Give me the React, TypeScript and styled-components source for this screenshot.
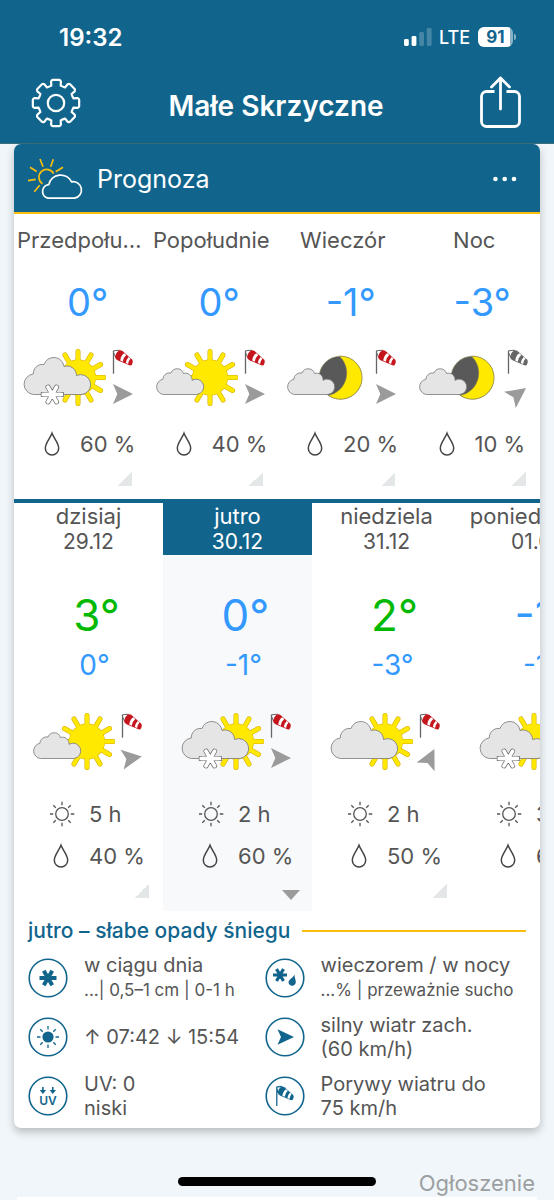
import React from 'react';
import styled, { createGlobalStyle } from 'styled-components';

const BLUE = '#11658d';
const YELLOW = '#f9bd0e';
const TEXT = '#555555';
const COLD = '#3399ff';
const WARM = '#00b900';

const GlobalStyle = createGlobalStyle`
  *, *::before, *::after { box-sizing: border-box; }
  body {
    margin: 0;
    background: #f0f6fa;
    color: ${TEXT};
    font-family: Inter, "Liberation Sans", sans-serif;
    font-size: 22px;
  }
  button { font: inherit; color: inherit; background: none; border: 0; padding: 0; cursor: pointer; }
  svg { display: block; flex: none; }
`;

/* ---------- page frame ---------- */

const Page = styled.div`
  display: flex;
  flex-direction: column;
  min-height: 100vh;
`;

const TopBar = styled.header`
  flex: none;
  background: ${BLUE};
  color: #fff;
  padding-bottom: 11px;
  border-bottom: 1px solid #3a7277;
`;

const StatusBar = styled.div`
  display: flex;
  align-items: center;
  height: 74px;
  padding: 0 41px 0 59px;
`;

const Clock = styled.time`
  flex: 1;
  font-size: 24px;
  font-weight: 600;
`;

const Network = styled.span`
  margin: 0 8px 0 7px;
  font-size: 18px;
  font-weight: 500;
`;

const Battery = styled.span`
  position: relative;
  display: flex;
  align-items: center;
  justify-content: center;
  width: 35px;
  height: 20px;
  border-radius: 6px;
  background: linear-gradient(to right, #fff 32px, #88b2c6 32px);
  color: ${BLUE};
  font-size: 17px;
  font-weight: 700;
  &::after {
    content: '';
    position: absolute;
    right: -3px;
    top: 7px;
    width: 2px;
    height: 6px;
    border-radius: 0 2px 2px 0;
    background: #88b2c6;
  }
`;

const TitleBar = styled.div`
  display: grid;
  grid-template-columns: 1fr auto 1fr;
  align-items: center;
  height: 58px;
  padding: 0 32px 0 30px;
  & > :last-child {
    justify-self: end;
  }
`;

const IconButton = styled.button`
  justify-self: start;
`;

const Title = styled.h1`
  margin: 0;
  padding-top: 5px;
  font-size: 28px;
  font-weight: 600;
`;

const Content = styled.main`
  display: flex;
  flex-direction: column;
  flex: 1;
  padding: 0 14px;
`;

/* ---------- forecast card ---------- */

const Card = styled.section`
  flex: none;
  overflow: hidden;
  border-radius: 7px;
  background: #fff;
  padding-bottom: 3px;
  box-shadow: 0 4px 8px rgba(0, 0, 0, 0.24);
`;

const CardHeader = styled.div`
  display: flex;
  align-items: center;
  height: 70px;
  padding: 2px 20px 0 13px;
  background: ${BLUE};
  border-bottom: 2px solid ${YELLOW};
  color: #fff;
`;

const CardTitle = styled.h2`
  flex: 1;
  margin: 0 0 0 12px;
  font-size: 25px;
  font-weight: 400;
`;

const Hours = styled.div`
  display: flex;
  border-bottom: 4px solid ${BLUE};
`;

const HourCell = styled.button`
  display: flex;
  flex-direction: column;
  flex: 1 1 0;
  min-width: 0;
  padding: 12px 0 13px;
`;

const HourName = styled.span`
  width: 100%;
  padding: 0 3px;
  line-height: 28px;
  overflow: hidden;
  text-overflow: ellipsis;
  white-space: nowrap;
`;

const Temp = styled.span<{ $color: string; $size: number; $line: number; $top: number; $inset: number }>`
  width: 100%;
  margin-top: ${(p) => p.$top}px;
  padding-left: ${(p) => p.$inset}px;
  color: ${(p) => p.$color};
  font-size: ${(p) => p.$size}px;
  line-height: ${(p) => p.$line}px;
`;

const SkyRow = styled.span<{ $inset: number; $top: number }>`
  display: flex;
  gap: 6px;
  margin: ${(p) => p.$top}px 0 0 ${(p) => p.$inset}px;
`;

const WindStack = styled.span`
  display: flex;
  flex-direction: column;
  gap: 9px;
`;

const Reading = styled.span<{ $inset: number; $top: number }>`
  display: flex;
  align-items: center;
  gap: 14px;
  margin: ${(p) => p.$top}px 0 0 ${(p) => p.$inset}px;
  line-height: 28px;
  white-space: nowrap;
`;

const Corner = styled.span`
  align-self: flex-end;
  width: 14px;
  height: 14px;
  margin: 14px 14px 0 0;
  background: linear-gradient(135deg, transparent 50%, #e4e7e8 50%);
`;

const OpenMark = styled.span`
  align-self: flex-end;
  height: 10px;
  margin: 20px 12px -2px 0;
  border: solid transparent;
  border-width: 10px 9px 0;
  border-top-color: #9b9b9b;
`;

const Days = styled.div`
  display: flex;
  overflow-x: auto;
  scrollbar-width: none;
`;

const DayCell = styled.button<{ $active: boolean }>`
  display: flex;
  flex: 0 0 149px;
  flex-direction: column;
  padding-bottom: 13px;
  background: ${(p) => (p.$active ? '#f7f9fb' : '#fff')};
`;

const DayHead = styled.span<{ $active: boolean }>`
  width: 100%;
  line-height: 26px;
  background: ${(p) => (p.$active ? BLUE : 'transparent')};
  color: ${(p) => (p.$active ? '#fff' : TEXT)};
`;

const DayLine = styled.span<{ $size: number }>`
  display: block;
  font-size: ${(p) => p.$size}px;
`;

/* ---------- details ---------- */

const DetailTitle = styled.h3`
  display: flex;
  align-items: center;
  gap: 12px;
  margin: 6px 14px 3px;
  color: ${BLUE};
  font-size: 21px;
  font-weight: 500;
  line-height: 28px;
  &::after {
    content: '';
    flex: 1;
    height: 2px;
    background: ${YELLOW};
  }
`;

const Details = styled.div`
  display: grid;
  grid-template-columns: 19fr 21fr;
  grid-auto-rows: 59px;
  padding: 0 14px;
`;

const Detail = styled.div`
  display: flex;
  align-items: center;
  gap: 16px;
  font-size: 20px;
  line-height: 24px;
  white-space: nowrap;
`;

const Small = styled.small`
  font-size: 17px;
`;

/* ---------- below the card ---------- */

const AdLabel = styled.p`
  flex: none;
  margin: 41px 5px 0 0;
  line-height: 28px;
  color: #9c9fa1;
  text-align: right;
`;

const AdCard = styled.div`
  flex: 1;
  margin: 0 3px;
  background: #fff;
`;

const HomeIndicator = styled.div`
  position: fixed;
  left: 50%;
  bottom: 14px;
  width: 198px;
  height: 9px;
  margin-left: -99px;
  border-radius: 5px;
  background: #000;
`;

/* ---------- drawings ---------- */

const polar = (r: number, deg: number) => {
  const a = (deg * Math.PI) / 180;
  return `${(r * Math.cos(a)).toFixed(2)} ${(r * Math.sin(a)).toFixed(2)}`;
};

const spokes = (count: number, from: number, to: number, start = 0) =>
  Array.from({ length: count }, (_, i) => {
    const a = start + (360 / count) * i;
    return `M${polar(from, a)}L${polar(to, a)}`;
  }).join('');

const gearPath =
  Array.from({ length: 8 }, (_, i) => {
    const a = i * 45;
    return `${i ? 'L' : 'M'}${polar(18, a - 15)}L${polar(22, a - 13)}Q${polar(23.4, a - 11)} ${polar(23.4, a - 8)}L${polar(
      23.4,
      a + 8
    )}Q${polar(23.4, a + 11)} ${polar(22, a + 13)}L${polar(18, a + 15)}Q${polar(17.6, a + 22.5)} ${polar(18, a + 30)}`;
  }).join('') + 'Z';

const GearIcon = () => (
  <svg width="52" height="52" viewBox="-26 -26 52 52" fill="none" stroke="#fff" strokeWidth="2.2" strokeLinejoin="round">
    <path d={gearPath} />
    <circle r="8.2" />
  </svg>
);

const ShareIcon = () => (
  <svg width="43" height="54" viewBox="0 0 43 54" fill="none" stroke="#fff" strokeWidth="2.8" strokeLinecap="butt">
    <path d="M15.500 15.500H7.500a5 5 0 0 0-5 5V45.500a5 5 0 0 0 5 5h28a5 5 0 0 0 5-5V20.500a5 5 0 0 0-5-5h-8" />
    <path d="M21.500 2V33M12.500 11L21.500 2L30.500 11" strokeLinecap="round" strokeLinejoin="round" />
  </svg>
);

const SignalIcon = () => (
  <svg width="28" height="18" viewBox="0 0 28 18" fill="#fff">
    <rect x="0" y="11" width="4.800" height="7" rx="1.400" />
    <rect x="7.600" y="8" width="4.800" height="10" rx="1.400" />
    <rect x="15.200" y="4" width="4.800" height="14" rx="1.400" opacity=".22" />
    <rect x="22.800" y="0" width="4.800" height="18" rx="1.400" opacity=".22" />
  </svg>
);

const ForecastLogo = () => (
  <svg width="58" height="44" viewBox="27 157 58 44" fill="none" strokeWidth="1.700">
    <g stroke={YELLOW}>
      <path d="M42.500 183.800A7.800 7.800 0 1 1 53.700 173.700" />
      <path d="M30 167.300L36.700 171.500M40 159L43 166.700M53.300 159.300L50.700 166.700M63 167.300L55.700 171.700M28 180.700L35.700 179.300M39.700 185.300L34.300 191.700" />
    </g>
    <path
      d="M48 198.200A6.900 6.900 0 0 1 48.800 184.600A12.200 12.200 0 0 1 71.600 181.800A8.300 8.300 0 1 1 74.600 198.200Z"
      stroke="#fff"
      strokeLinejoin="round"
    />
  </svg>
);

const DotsIcon = () => (
  <svg width="28" height="8" viewBox="0 0 28 8" fill="#fff">
    <circle cx="3.400" cy="4" r="2.300" />
    <circle cx="12.700" cy="4" r="2.300" />
    <circle cx="22" cy="4" r="2.300" />
  </svg>
);

const Sun = () => (
  <g transform="translate(56 29.500)" strokeLinecap="round">
    <path d={spokes(12, 12, 26)} stroke="#d9ae00" strokeWidth="5" />
    <circle r="18" fill="#d9ae00" />
    <path d={spokes(12, 12, 26)} stroke="#ffe900" strokeWidth="3.800" />
    <circle r="17.500" fill="#ffe900" />
  </g>
);

const Moon = () => (
  <g stroke="#8a8453" strokeWidth=".6">
    <circle cx="55.500" cy="29.700" r="21.500" fill="#595959" />
    <path d="M54.500 8.200A21.500 21.500 0 1 1 43.500 47.500A23 23 0 0 0 54.500 8.200Z" fill="#ffe900" />
  </g>
);

const SmallCloud = () => (
  <path
    d="M9.500 46.500A7.700 7.700 0 0 1 8.800 31.300A6.800 6.800 0 0 1 17 25A6.600 6.600 0 0 1 29.500 25.500A6.500 6.500 0 0 1 38 32.300A7.700 7.700 0 1 1 43 46.500Z"
    fill="#e5e5e5"
    stroke="#777"
    strokeWidth=".8"
  />
);

const BigCloud = () => (
  <path
    d="M11.500 46.500A10.300 10.300 0 0 1 11.300 26A9.200 9.200 0 0 1 22 16.500A10.300 10.300 0 0 1 42 18.500A9.500 9.500 0 0 1 54.500 27.500A10 10 0 1 1 60 46.500Z"
    fill="#e5e5e5"
    stroke="#777"
    strokeWidth=".8"
  />
);

const Flake = () => (
  <g transform="translate(30.300 46.500)">
    <g stroke="#6a6a6a" strokeWidth="5">
      <path d="M-11.500 0H11.500" />
      <path d={spokes(6, 0, 8.600)} strokeLinecap="round" />
    </g>
    <g stroke="#fff" strokeWidth="3.600">
      <path d="M-10.800 0H10.800" />
      <path d={spokes(6, 0, 8.600)} strokeLinecap="round" />
    </g>
  </g>
);

type Sky = 'snow' | 'sunny' | 'cloudy' | 'night';

const SkyIcon = ({ sky }: { sky: Sky }) => (
  <svg width="84" height="60" viewBox="0 0 84 60" fill="none">
    {sky === 'night' ? <Moon /> : <Sun />}
    {sky === 'sunny' || sky === 'night' ? <SmallCloud /> : <BigCloud />}
    {sky === 'snow' && <Flake />}
  </svg>
);

const Sock = ({ color, gap = '#fff' }: { color: string; gap?: string }) => (
  <>
    <path d="M7 2.300Q9 1.800 10.500 3L20 11.500Q21.800 13.500 19.500 17.300L18 17.500L6 12.500Q3 11 3 8.800Q4 4.500 7 2.300Z" fill={color} />
    <path d="M12.200 5.200Q8.800 7.500 8.200 12.600L10.800 13.700Q11.300 9.200 14.300 6.900ZM16.700 9Q14.300 11.500 13.800 15L16.100 16Q16.600 12.500 18.500 10.500Z" fill={gap} />
  </>
);

const WindSock = ({ color }: { color: string }) => (
  <svg width="22" height="26" viewBox="0 0 22 26" fill="none">
    <path d="M1.500 25.500V2.800L7.500 2.200M1.500 4.500L3.500 9" stroke="#666" strokeWidth="1" />
    <path d="M1.500 25.500V2.800" stroke="#666" strokeWidth="1.300" />
    <Sock color={color} />
  </svg>
);

const WindArrow = ({ angle }: { angle: number }) => (
  <svg width="22" height="22" viewBox="-11 -11 22 22" overflow="visible">
    <path d="M-10 -10L10 0L-10 10L-5.700 0Z" fill="#9b9b9b" transform={`rotate(${angle})`} />
  </svg>
);

const DropIcon = () => (
  <svg width="25" height="26" viewBox="0 0 25 26" fill="none">
    <path d="M11 2.200C9 7.500 4.300 12 4.300 17.200A6.700 6.700 0 0 0 17.700 17.200C17.700 12 13 7.500 11 2.200Z" stroke="#444" strokeWidth="1.500" />
  </svg>
);

const SunHoursIcon = () => (
  <svg width="25" height="26" viewBox="-12 -13 25 26" fill="none" stroke="#555" strokeWidth="1.300">
    <circle r="6.300" />
    <path d={spokes(8, 8.800, 12.300)} />
  </svg>
);

type DetailKind = 'snow' | 'sun' | 'uv' | 'mixed' | 'wind' | 'gust';

const DetailIcon = ({ kind }: { kind: DetailKind }) => (
  <svg width="40" height="40" viewBox="-20 -20 40 40" fill="none" stroke={BLUE}>
    <circle r="18.800" strokeWidth="1.600" />
    {kind === 'snow' && <path d={spokes(6, 0, 8.500)} strokeWidth="4" />}
    {kind === 'sun' && (
      <>
        <circle r="5.600" fill={BLUE} stroke="none" />
        <path d={spokes(8, 7.500, 11)} strokeWidth="1.300" />
      </>
    )}
    {kind === 'uv' && (
      <g fill={BLUE} stroke="none">
        <path d="M-5.900 -9h1.600v3h2.400L-5.100 -2L-8.300 -6h2.400ZM4 -9h1.600v3h2.400L4.800 -2L1.600 -6h2.400Z" />
        <text x="0" y="9" textAnchor="middle" fontSize="12" fontWeight="600">
          UV
        </text>
      </g>
    )}
    {kind === 'mixed' && (
      <>
        <path d={spokes(6, 0, 7)} strokeWidth="3.200" transform="translate(-5 -3)" />
        <path d="M9.600 -3.500C9.300 0 11 1.500 10.800 4.600A3.700 3.700 0 0 1 3.500 4.600C3.500 1.500 8 0 9.600 -3.500Z" fill={BLUE} stroke="none" />
      </>
    )}
    {kind === 'wind' && <path d="M-7.500 -7.700L9 0L-7.500 7.700L-4 0Z" fill={BLUE} stroke="none" />}
    {kind === 'gust' && (
      <g transform="translate(-10 -11.500) scale(.9)">
        <path d="M2 24V2.800L7.500 2.200M2 4.500L3.500 9" strokeWidth="1.400" />
        <g stroke="none">
          <Sock color={BLUE} />
        </g>
      </g>
    )}
  </svg>
);

/* ---------- data ---------- */

const RED = '#c4161c';

const hours: { name: string; temp: number; sky: Sky; sock: string; angle: number; rain: number }[] = [
  { name: 'Przedpołudnie', temp: 0, sky: 'snow', sock: RED, angle: 0, rain: 60 },
  { name: 'Popołudnie', temp: 0, sky: 'sunny', sock: RED, angle: 0, rain: 40 },
  { name: 'Wieczór', temp: -1, sky: 'night', sock: RED, angle: 0, rain: 20 },
  { name: 'Noc', temp: -3, sky: 'night', sock: '#666666', angle: -36, rain: 10 },
];

const days: { name: string; date: string; high: number; low: number; sky: Sky; angle: number; sun: number; rain: number }[] = [
  { name: 'dzisiaj', date: '29.12', high: 3, low: 0, sky: 'sunny', angle: -9, sun: 5, rain: 40 },
  { name: 'jutro', date: '30.12', high: 0, low: -1, sky: 'snow', angle: 0, sun: 2, rain: 60 },
  { name: 'niedziela', date: '31.12', high: 2, low: -3, sky: 'cloudy', angle: -64, sun: 2, rain: 50 },
  { name: 'poniedziałek', date: '01.01', high: -1, low: -1, sky: 'snow', angle: 0, sun: 3, rain: 60 },
];

const details: { kind: DetailKind; first: string; second?: string; small?: boolean }[] = [
  { kind: 'snow', first: 'w ciągu dnia', second: '...| 0,5–1 cm | 0-1 h', small: true },
  { kind: 'mixed', first: 'wieczorem / w nocy', second: '...% | przeważnie sucho', small: true },
  { kind: 'sun', first: '↑ 07:42 ↓ 15:54' },
  { kind: 'wind', first: 'silny wiatr zach.', second: '(60 km/h)' },
  { kind: 'uv', first: 'UV: 0', second: 'niski' },
  { kind: 'gust', first: 'Porywy wiatru do', second: '75 km/h' },
];

const tempColor = (t: number) => (t > 0 ? WARM : COLD);

export default function App() {
  const [selected, setSelected] = React.useState('jutro');

  return (
    <Page>
      <GlobalStyle />
      <TopBar>
        <StatusBar>
          <Clock>19:32</Clock>
          <SignalIcon />
          <Network>LTE</Network>
          <Battery>91</Battery>
        </StatusBar>
        <TitleBar>
          <IconButton aria-label="Ustawienia">
            <GearIcon />
          </IconButton>
          <Title>Małe Skrzyczne</Title>
          <IconButton aria-label="Udostępnij">
            <ShareIcon />
          </IconButton>
        </TitleBar>
      </TopBar>

      <Content>
        <Card>
          <CardHeader>
            <ForecastLogo />
            <CardTitle>Prognoza</CardTitle>
            <IconButton aria-label="Więcej">
              <DotsIcon />
            </IconButton>
          </CardHeader>

          <Hours>
            {hours.map((h) => (
              <HourCell key={h.name}>
                <HourName>{h.name}</HourName>
                <Temp $color={COLD} $size={38} $line={48} $top={24} $inset={16}>
                  {h.temp}°
                </Temp>
                <SkyRow $inset={8} $top={22}>
                  <SkyIcon sky={h.sky} />
                  <WindStack>
                    <WindSock color={h.sock} />
                    <WindArrow angle={h.angle} />
                  </WindStack>
                </SkyRow>
                <Reading $inset={27} $top={22}>
                  <DropIcon />
                  <span>{h.rain} %</span>
                </Reading>
                <Corner />
              </HourCell>
            ))}
          </Hours>

          <Days>
            {days.map((d) => {
              const active = d.name === selected;
              return (
                <DayCell key={d.name} $active={active} onClick={() => setSelected(d.name)}>
                  <DayHead $active={active}>
                    <DayLine $size={22}>{d.name}</DayLine>
                    <DayLine $size={21}>{d.date}</DayLine>
                  </DayHead>
                  <Temp $color={tempColor(d.high)} $size={44} $line={56} $top={32} $inset={16}>
                    {d.high}°
                  </Temp>
                  <Temp $color={tempColor(d.low)} $size={28} $line={32} $top={6} $inset={12}>
                    {d.low}°
                  </Temp>
                  <SkyRow $inset={17} $top={31}>
                    <SkyIcon sky={d.sky} />
                    <WindStack>
                      <WindSock color={RED} />
                      <WindArrow angle={d.angle} />
                    </WindStack>
                  </SkyRow>
                  <Reading $inset={36} $top={28}>
                    <SunHoursIcon />
                    <span>{d.sun} h</span>
                  </Reading>
                  <Reading $inset={36} $top={14}>
                    <DropIcon />
                    <span>{d.rain} %</span>
                  </Reading>
                  {active ? <OpenMark /> : <Corner />}
                </DayCell>
              );
            })}
          </Days>

          <DetailTitle>jutro – słabe opady śniegu</DetailTitle>
          <Details>
            {details.map((d) => (
              <Detail key={d.kind}>
                <DetailIcon kind={d.kind} />
                <div>
                  <div>{d.first}</div>
                  {d.second && <div>{d.small ? <Small>{d.second}</Small> : d.second}</div>}
                </div>
              </Detail>
            ))}
          </Details>
        </Card>

        <AdLabel>Ogłoszenie</AdLabel>
        <AdCard />
      </Content>
      <HomeIndicator />
    </Page>
  );
}
